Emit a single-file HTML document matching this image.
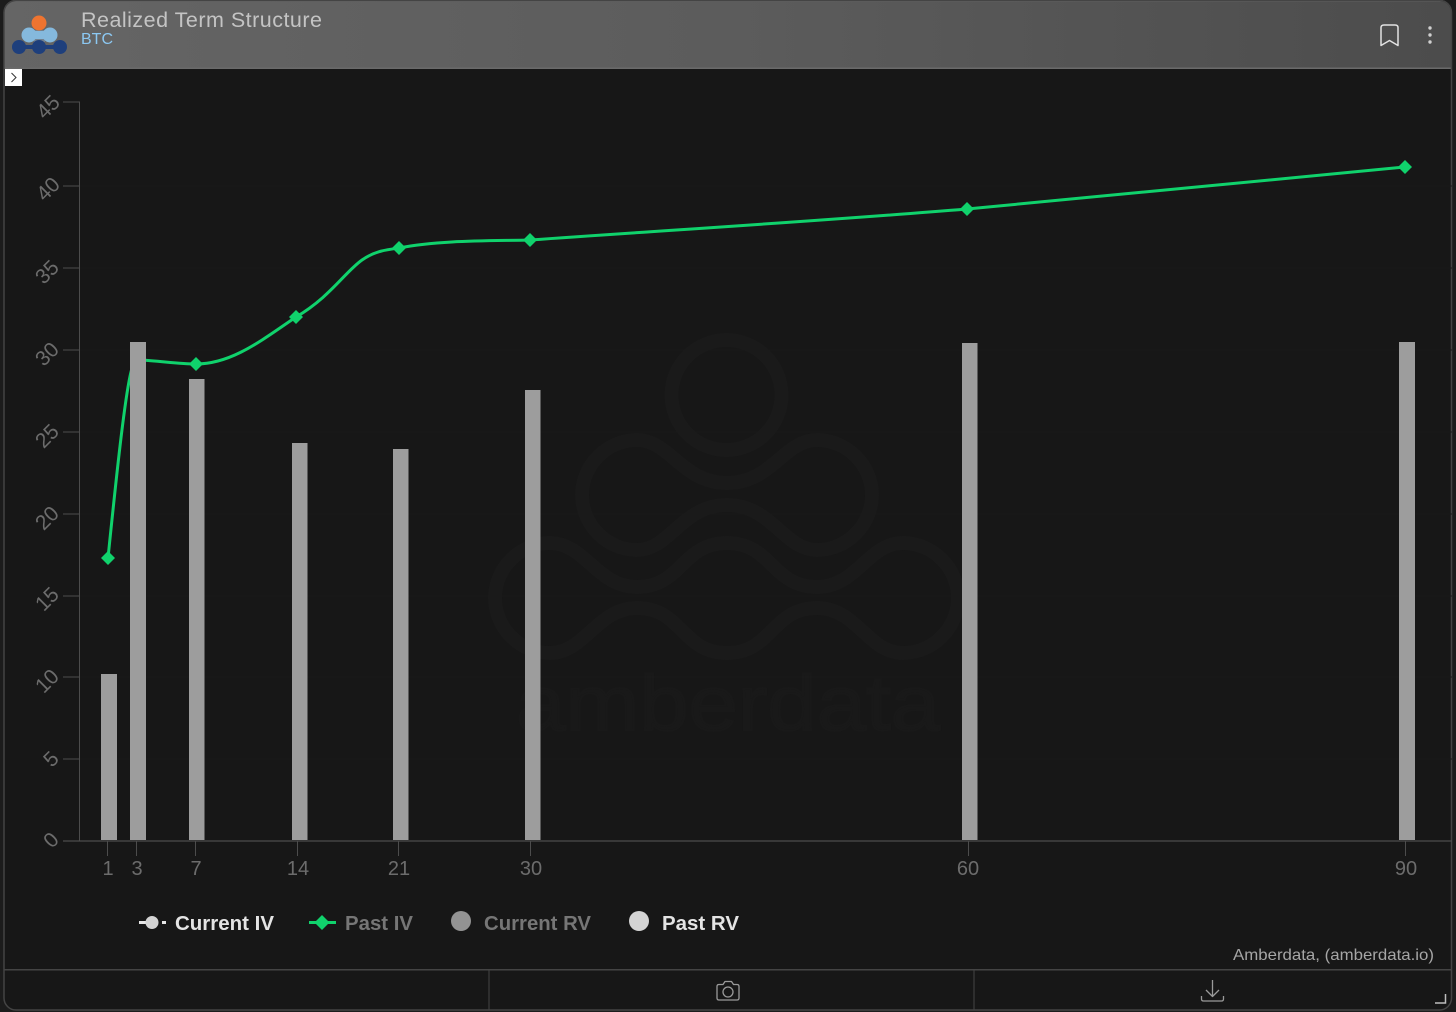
<!DOCTYPE html>
<html><head><meta charset="utf-8">
<style>
html,body{margin:0;padding:0;background:#1c1c1c;width:1456px;height:1012px;overflow:hidden}
svg{display:block}
text{font-family:"Liberation Sans",sans-serif}
</style></head><body>
<svg width="1456" height="1012" viewBox="0 0 1456 1012" xmlns="http://www.w3.org/2000/svg">
<defs>
<linearGradient id="hd" x1="0" x2="1" y1="0" y2="0"><stop offset="0" stop-color="#656565"/><stop offset="0.5" stop-color="#5c5c5c"/><stop offset="1" stop-color="#4c4c4c"/></linearGradient>
<clipPath id="win"><rect x="4" y="0" width="1448" height="1010" rx="12"/></clipPath>
</defs>
<rect x="0" y="0" width="1456" height="1012" fill="#1c1c1c"/>
<g clip-path="url(#win)">
<rect x="4" y="0" width="1448" height="1010" fill="#171717"/>
<rect x="4" y="0" width="1448" height="68" fill="url(#hd)"/>
<rect x="4" y="67.500" width="1448" height="1.500" fill="#6a6a6a"/>
<rect x="4" y="0" width="1448" height="1.500" fill="#767676"/>
</g>
<rect x="4" y="0.500" width="1447.500" height="1009.500" rx="12" fill="none" stroke="#444" stroke-width="1.500"/>

<!-- logo -->
<rect x="34" y="30" width="11" height="12" fill="#72808e"/>
<rect x="29" y="31" width="21" height="8" fill="#85b9dd"/>
<rect x="19" y="45" width="41" height="4" fill="#1e3f7c"/>
<circle cx="29" cy="35" r="7.500" fill="#85b9dd"/><circle cx="50" cy="35" r="7.500" fill="#85b9dd"/>
<circle cx="19" cy="47" r="7" fill="#1e3f7c"/><circle cx="39" cy="47" r="7" fill="#1e3f7c"/><circle cx="60" cy="47" r="7" fill="#1e3f7c"/>
<circle cx="39" cy="23" r="7.500" fill="#ee7430"/>

<text x="81" y="27" font-size="21.500" fill="#c4c4c4" textLength="241" lengthAdjust="spacing">Realized Term Structure</text>
<text x="81" y="44" font-size="16" fill="#8cc8f2" textLength="32" lengthAdjust="spacing">BTC</text>

<!-- bookmark + menu -->
<path d="M1381 27.500 Q1381 25 1384 25 L1395 25 Q1398 25 1398 27.500 L1398 45.500 L1389.500 40.500 L1381 45.500 Z" fill="none" stroke="#e2e2e2" stroke-width="1.500" stroke-linejoin="round"/>
<circle cx="1430" cy="28" r="1.700" fill="#d0d0d0"/><circle cx="1430" cy="35" r="1.700" fill="#d0d0d0"/><circle cx="1430" cy="42" r="1.700" fill="#d0d0d0"/>

<!-- toggle -->
<rect x="5" y="69" width="17" height="17" fill="#ffffff"/>
<path d="M11.500 73 L16 77.500 L11.500 82" fill="none" stroke="#333" stroke-width="1"/>

<!-- watermark -->
<g fill="none" stroke="#1a1a1a" stroke-width="14" stroke-linejoin="round">
<circle cx="726.500" cy="395" r="55"/>
<path d="M637 440 C670 440 682 483 727 483 C772 483 784 440 817 440 C847 440 872 465 872 495 C872 525 847 550 817 550 C784 550 772 505 727 505 C682 505 670 550 637 550 C607 550 582 525 582 495 C582 465 607 440 637 440 Z"/>
<path d="M550 543 C585 543 597 587 637 587 C682 587 682 543 727 543 C772 543 772 587 817 587 C857 587 868 543 903 543 C933 543 958 568 958 598 C958 628 933 653 903 653 C868 653 857 608 817 608 C772 608 772 653 727 653 C682 653 682 608 637 608 C597 608 585 653 550 653 C520 653 495 628 495 598 C495 568 520 543 550 543 Z"/>
</g>
<text x="516" y="730" font-size="78" fill="#191919" stroke="#191919" stroke-width="2" textLength="424" lengthAdjust="spacingAndGlyphs">amberdata</text>

<!-- faint grid -->
<g stroke="#1a1a1a" stroke-width="1">
<path d="M80 186H1452M80 268H1452M80 350H1452M80 432H1452M80 514H1452M80 596H1452M80 677H1452M80 759H1452"/>
</g>

<!-- axes -->
<g stroke="#4c4c4c" stroke-width="1" fill="none">
<path d="M63 102H79.500V841M63 186H79.500M63 268H79.500M63 350H79.500M63 432H79.500M63 514H79.500M63 596H79.500M63 677H79.500M63 759H79.500"/>
<path d="M63 841H1452" stroke-width="1.200"/>
<path d="M107.500 841V856M136.500 841V856M195.500 841V856M297.500 841V856M398.500 841V856M530.500 841V856M968.500 841V856M1405.500 841V856"/>
</g>
<g font-size="21" fill="#6c6c6c" text-anchor="middle">
<text transform="translate(53,112) rotate(-45)">45</text>
<text transform="translate(53,194) rotate(-45)">40</text>
<text transform="translate(52,277) rotate(-45)">35</text>
<text transform="translate(52,359) rotate(-45)">30</text>
<text transform="translate(52,441) rotate(-45)">25</text>
<text transform="translate(52,523) rotate(-45)">20</text>
<text transform="translate(52,604) rotate(-45)">15</text>
<text transform="translate(52,686) rotate(-45)">10</text>
<text transform="translate(56,764) rotate(-45)">5</text>
<text transform="translate(56,845) rotate(-45)">0</text>
<text x="108" y="875" font-size="20">1</text>
<text x="137" y="875" font-size="20">3</text>
<text x="196" y="875" font-size="20">7</text>
<text x="298" y="875" font-size="20">14</text>
<text x="399" y="875" font-size="20">21</text>
<text x="531" y="875" font-size="20">30</text>
<text x="968" y="875" font-size="20">60</text>
<text x="1406" y="875" font-size="20">90</text>
</g>

<!-- line -->
<path d="M108 558 C114 500 124 400 131 372 C133 362 137 360 141 360 C160 361 180 364 196 364 C232 364 262 340 296 317 C330 297 345 272 362 260 C375 251 385 250 399 248 C440 240 490 241 530 240 C676 229.700 821 221 967 209 C1113 195 1259 181 1405 167" fill="none" stroke="#10d26c" stroke-width="3"/>

<!-- bars -->
<g fill="#9d9d9d">
<rect x="101" y="674" width="16" height="166"/>
<rect x="130" y="342" width="16" height="498"/>
<rect x="189" y="379" width="15.500" height="461"/>
<rect x="292" y="443" width="15.500" height="397"/>
<rect x="393" y="449" width="15.500" height="391"/>
<rect x="525" y="390" width="15.500" height="450"/>
<rect x="962" y="343" width="15.500" height="497"/>
<rect x="1399" y="342" width="16" height="498"/>
</g>

<!-- markers -->
<g fill="#10d26c">
<path d="M108 551L115 558L108 565L101 558Z"/>
<path d="M196 357L203 364L196 371L189 364Z"/>
<path d="M296 310L303 317L296 324L289 317Z"/>
<path d="M399 241L406 248L399 255L392 248Z"/>
<path d="M530 233L537 240L530 247L523 240Z"/>
<path d="M967 202L974 209L967 216L960 209Z"/>
<path d="M1405 160L1412 167L1405 174L1398 167Z"/>
</g>

<!-- legend -->
<rect x="139" y="921" width="14" height="3" fill="#e6e6e6"/>
<rect x="162" y="921" width="4" height="3" fill="#e6e6e6"/>
<circle cx="152" cy="922.500" r="6.500" fill="#d4d4d4"/>
<text x="175" y="930" font-size="20" font-weight="700" fill="#e4e4e4" textLength="99" lengthAdjust="spacingAndGlyphs">Current IV</text>
<rect x="309" y="921" width="27" height="3" fill="#10d26c"/>
<path d="M322 915L329.500 922.500L322 930L314.500 922.500Z" fill="#10d26c"/>
<text x="345" y="930" font-size="20" font-weight="700" fill="#767676" textLength="68" lengthAdjust="spacingAndGlyphs">Past IV</text>
<circle cx="461" cy="921" r="10" fill="#939393"/>
<text x="484" y="930" font-size="20" font-weight="700" fill="#767676" textLength="107" lengthAdjust="spacingAndGlyphs">Current RV</text>
<circle cx="639" cy="921" r="10" fill="#d4d4d4"/>
<text x="662" y="930" font-size="20" font-weight="700" fill="#e4e4e4" textLength="77" lengthAdjust="spacingAndGlyphs">Past RV</text>

<text x="1233" y="960" font-size="16" fill="#a6a6a6" textLength="201" lengthAdjust="spacingAndGlyphs">Amberdata, (amberdata.io)</text>

<!-- footer -->
<rect x="4" y="969" width="1447" height="1.500" fill="#444"/>
<rect x="488.500" y="970" width="1" height="40" fill="#444"/>
<rect x="973.500" y="970" width="1" height="40" fill="#444"/>
<g fill="none" stroke="#9a9a9a" stroke-width="1.300" stroke-linejoin="round">
<path d="M719 984.500 H723 L725 981.500 H731.500 L733.500 984.500 H737 Q739 984.500 739 986.500 V998 Q739 1000 737 1000 H719 Q717 1000 717 998 V986.500 Q717 984.500 719 984.500 Z"/>
<circle cx="728" cy="992" r="5"/>
<path d="M1212.500 980 V996 M1206 990 L1212.500 996.500 L1219 990 M1201.500 996 V999 Q1201.500 1001 1203.500 1001 H1221.500 Q1223.500 1001 1223.500 999 V996"/>
</g>
<path d="M1435 1003 H1445.500 V994" fill="none" stroke="#bdbdbd" stroke-width="1.500"/>
</svg>
</body></html>
